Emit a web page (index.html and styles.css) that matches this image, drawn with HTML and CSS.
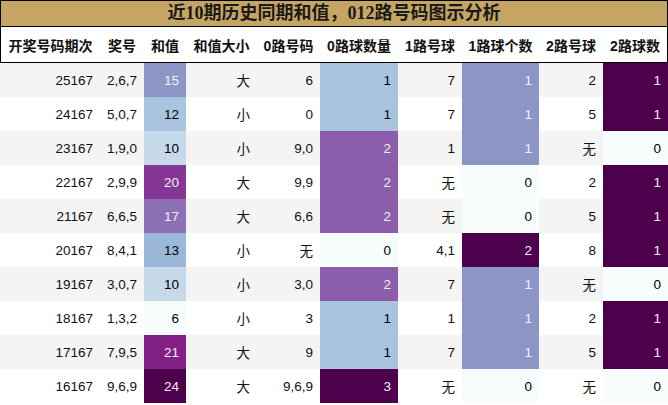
FILE: index.html
```html
<!DOCTYPE html>
<html lang="zh">
<head>
<meta charset="utf-8">
<title>近10期历史同期和值，012路号码图示分析</title>
<link rel="stylesheet" href="styles.css">
</head>
<body>
<div class="title">近10期历史同期和值，012路号码图示分析</div>
<table class="grid">
  <colgroup>
    <col class="w100"><col class="w44"><col class="w42"><col class="w71"><col class="w63">
    <col class="w78"><col class="w64"><col class="w77"><col class="w64"><col class="w65">
  </colgroup>
  <thead>
    <tr>
      <th>开奖号码期次</th><th>奖号</th><th>和值</th><th>和值大小</th><th>0路号码</th>
      <th>0路球数量</th><th>1路号球</th><th>1路球个数</th><th>2路号球</th><th>2路球数</th>
    </tr>
  </thead>
  <tbody>
    <tr><td>25167</td><td>2,6,7</td><td class="b-8c">15</td><td>大</td><td>6</td><td class="b-a9">1</td><td>7</td><td class="b-8c">1</td><td>2</td><td class="b-4d">1</td></tr>
    <tr><td>24167</td><td>5,0,7</td><td class="b-a9">12</td><td>小</td><td>0</td><td class="b-a9">1</td><td>7</td><td class="b-8c">1</td><td>5</td><td class="b-4d">1</td></tr>
    <tr><td>23167</td><td>1,9,0</td><td class="b-c6">10</td><td>小</td><td>9,0</td><td class="b-8b">2</td><td>1</td><td class="b-8c">1</td><td>无</td><td class="b-f7">0</td></tr>
    <tr><td>22167</td><td>2,9,9</td><td class="b-86">20</td><td>大</td><td>9,9</td><td class="b-8b">2</td><td>无</td><td class="b-f7">0</td><td>2</td><td class="b-4d">1</td></tr>
    <tr><td>21167</td><td>6,6,5</td><td class="b-8c7">17</td><td>大</td><td>6,6</td><td class="b-8b">2</td><td>无</td><td class="b-f7">0</td><td>5</td><td class="b-4d">1</td></tr>
    <tr><td>20167</td><td>8,4,1</td><td class="b-9c">13</td><td>小</td><td>无</td><td class="b-f7">0</td><td>4,1</td><td class="b-4d">2</td><td>8</td><td class="b-4d">1</td></tr>
    <tr><td>19167</td><td>3,0,7</td><td class="b-c6">10</td><td>小</td><td>3,0</td><td class="b-8b">2</td><td>7</td><td class="b-8c">1</td><td>无</td><td class="b-f7">0</td></tr>
    <tr><td>18167</td><td>1,3,2</td><td class="b-f7">6</td><td>小</td><td>3</td><td class="b-a9">1</td><td>1</td><td class="b-8c">1</td><td>2</td><td class="b-4d">1</td></tr>
    <tr><td>17167</td><td>7,9,5</td><td class="b-83">21</td><td>大</td><td>9</td><td class="b-a9">1</td><td>7</td><td class="b-8c">1</td><td>5</td><td class="b-4d">1</td></tr>
    <tr><td>16167</td><td>9,6,9</td><td class="b-4d">24</td><td>大</td><td>9,6,9</td><td class="b-4d">3</td><td>无</td><td class="b-f7">0</td><td>无</td><td class="b-f7">0</td></tr>
  </tbody>
</table>
</body>
</html>
```
FILE: styles.css
```css
html, body {
  margin: 0;
  padding: 0;
  background: #ffffff;
}

.title {
  height: 25px;
  border: 1px solid #000;
  background: #c5a563;
  color: #1a1a1a;
  font-family: "Liberation Serif", "Noto Sans CJK SC", serif;
  font-weight: bold;
  font-size: 18px;
  line-height: 25px;
  text-align: center;
  white-space: nowrap;
}

.grid {
  border-collapse: separate;
  border-spacing: 0;
  table-layout: fixed;
  width: 668px;
  font-family: "Liberation Sans", "Noto Sans CJK SC", sans-serif;
  font-size: 13.5px;
  color: #111;
}

.w100 { width: 100px; }
.w44 { width: 44px; }
.w42 { width: 42px; }
.w71 { width: 71px; }
.w63 { width: 63px; }
.w78 { width: 78px; }
.w64 { width: 64px; }
.w77 { width: 77px; }
.w65 { width: 65px; }

.grid th {
  height: 35px;
  padding: 0;
  border-bottom: 1px solid #000;
  font-size: 14px;
  font-weight: bold;
  text-align: center;
  vertical-align: middle;
  white-space: nowrap;
  background: #fff;
  color: #111;
}

.grid th:first-child { border-left: 1px solid #000; }
.grid th:last-child { border-right: 1px solid #000; }

.grid td {
  height: 34px;
  padding: 0 7px;
  text-align: right;
  vertical-align: middle;
  white-space: nowrap;
}

.grid tbody tr:nth-child(odd) { background: #f4f4f4; }
.grid tbody tr:nth-child(even) { background: #ffffff; }

.b-f7 { background: #f7fcfd; color: #000; }
.b-c6 { background: #c6d9e9; color: #000; }
.b-a9 { background: #a9c4de; color: #000; }
.b-9c { background: #9cb8d8; color: #000; }
.b-8c { background: #8c96c6; color: #f1f1f1; }
.b-8c7 { background: #8c70b3; color: #f1f1f1; }
.b-8b { background: #8b5daa; color: #f1f1f1; }
.b-86 { background: #863696; color: #f1f1f1; }
.b-83 { background: #832087; color: #f1f1f1; }
.b-4d { background: #4d004b; color: #f1f1f1; }
```
